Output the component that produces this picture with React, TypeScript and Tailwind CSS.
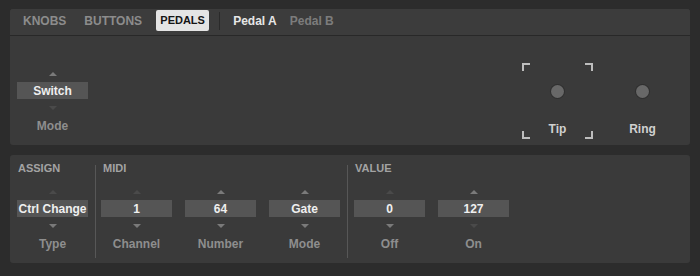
import React from "react";

const Tri = ({ dir, lit }: { dir: "up" | "down"; lit: boolean }) => {
  if (dir === "up") {
    return (
      <div
        className={
          lit
            ? "w-0 h-0 border-x-[4px] border-x-transparent border-b-[4px] border-b-[#7a7a7a]"
            : "w-0 h-0 border-x-[4px] border-x-transparent border-b-[4px] border-b-[#4a4a4a]"
        }
      />
    );
  }
  return (
    <div
      className={
        lit
          ? "w-0 h-0 border-x-[4px] border-x-transparent border-t-[4px] border-t-[#7a7a7a]"
          : "w-0 h-0 border-x-[4px] border-x-transparent border-t-[4px] border-t-[#4a4a4a]"
      }
    />
  );
};

function Stepper({
  value,
  label,
  up = true,
  down = true,
}: {
  value: string;
  label: string;
  up?: boolean;
  down?: boolean;
}) {
  return (
    <div className="w-[71px] flex flex-col items-center">
      <Tri dir="up" lit={up} />
      <div className="mt-[6px] w-full h-[17px] bg-[#555555] flex items-center justify-center text-[12px] font-bold text-[#efefef] leading-none">
        {value}
      </div>
      <div className="mt-[7px]">
        <Tri dir="down" lit={down} />
      </div>
      <div className="mt-[9px] text-[12px] leading-[14px] font-bold text-[#8e8e8e]">{label}</div>
    </div>
  );
}

function Jack({ label, selected }: { label: string; selected?: boolean }) {
  return (
    <div className="relative w-[71px] h-[76px] flex flex-col items-center pt-[22px]">
      {selected && (
        <>
          <span className="absolute left-0 top-0 w-[8px] h-[8px] border-l-2 border-t-2 border-[#bdbdbd]" />
          <span className="absolute right-0 top-0 w-[8px] h-[8px] border-r-2 border-t-2 border-[#bdbdbd]" />
          <span className="absolute left-0 bottom-0 w-[8px] h-[8px] border-l-2 border-b-2 border-[#bdbdbd]" />
          <span className="absolute right-0 bottom-0 w-[8px] h-[8px] border-r-2 border-b-2 border-[#bdbdbd]" />
        </>
      )}
      <div className="w-[13px] h-[13px] rounded-full bg-[#686868] shadow-[0_0_0_1px_#303030]" />
      <div className="mt-[24px] text-[12px] leading-[14px] font-bold text-[#d0d0d0]">{label}</div>
    </div>
  );
}

export default function App() {
  return (
    <div className="w-[700px] h-[276px] overflow-hidden bg-[#2c2c2c] pt-[9px] px-[10px] font-['Liberation_Sans',Arial,sans-serif]">
      {/* upper panel */}
      <div className="h-[136px] rounded-[3px] bg-[#3a3a3a]">
        {/* tabs */}
        <div className="h-[27px] flex items-start pt-[1px] pl-[13px] bg-[#3c3c3c] rounded-t-[3px] border-b border-[#282828]">
          <div className="h-[21px] flex items-center text-[12px] font-bold text-[#8c8c8c]">KNOBS</div>
          <div className="ml-[18px] h-[21px] flex items-center text-[12px] font-bold text-[#8c8c8c]">BUTTONS</div>
          <div className="ml-[14px] w-[53px] h-[21px] rounded-[2px] bg-[#e4e4e4] flex items-center justify-center text-[11px] font-bold text-[#151515]">
            PEDALS
          </div>
          <div className="ml-[10px] mt-[2px] w-px h-[18px] bg-[#2a2a2a]" />
          <div className="ml-[13px] h-[21px] flex items-center text-[12px] font-bold text-[#e6e6e6]">Pedal A</div>
          <div className="ml-[13px] h-[21px] flex items-center text-[12px] font-bold text-[#7c7c7c]">Pedal B</div>
        </div>

        {/* pedal content */}
        <div className="h-[109px] flex items-start pl-[7px] pr-[12px]">
          <div className="mt-[36px]">
            <Stepper value="Switch" label="Mode" up={true} down={false} />
          </div>
          <div className="flex-1" />
          <div className="mt-[27px]">
            <Jack label="Tip" selected />
          </div>
          <div className="mt-[27px] ml-[14px]">
            <Jack label="Ring" />
          </div>
        </div>
      </div>

      {/* lower panel */}
      <div className="mt-[10px] h-[108px] rounded-[3px] bg-[#3a3a3a] flex items-stretch px-[7px]">
        <div className="flex flex-col pt-[7px]">
          <div className="h-[13px] pl-px text-[11px] leading-[13px] font-bold text-[#a3a3a3]">ASSIGN</div>
          <div className="mt-[15px]">
            <Stepper value="Ctrl Change" label="Type" up={false} />
          </div>
        </div>

        <div className="ml-[7px] mr-[5px] mt-[10px] mb-[5px] w-px bg-[#575757]" />

        <div className="flex flex-col pt-[7px]">
          <div className="h-[13px] pl-[2px] text-[11px] leading-[13px] font-bold text-[#a3a3a3]">MIDI</div>
          <div className="mt-[15px] flex gap-[13px]">
            <Stepper value="1" label="Channel" up={false} />
            <Stepper value="64" label="Number" />
            <Stepper value="Gate" label="Mode" />
          </div>
        </div>

        <div className="ml-[7px] mr-[6px] mt-[10px] mb-[5px] w-px bg-[#575757]" />

        <div className="flex flex-col pt-[7px]">
          <div className="h-[13px] pl-px text-[11px] leading-[13px] font-bold text-[#a3a3a3]">VALUE</div>
          <div className="mt-[15px] flex gap-[13px]">
            <Stepper value="0" label="Off" up={false} />
            <Stepper value="127" label="On" down={false} />
          </div>
        </div>
      </div>
    </div>
  );
}
